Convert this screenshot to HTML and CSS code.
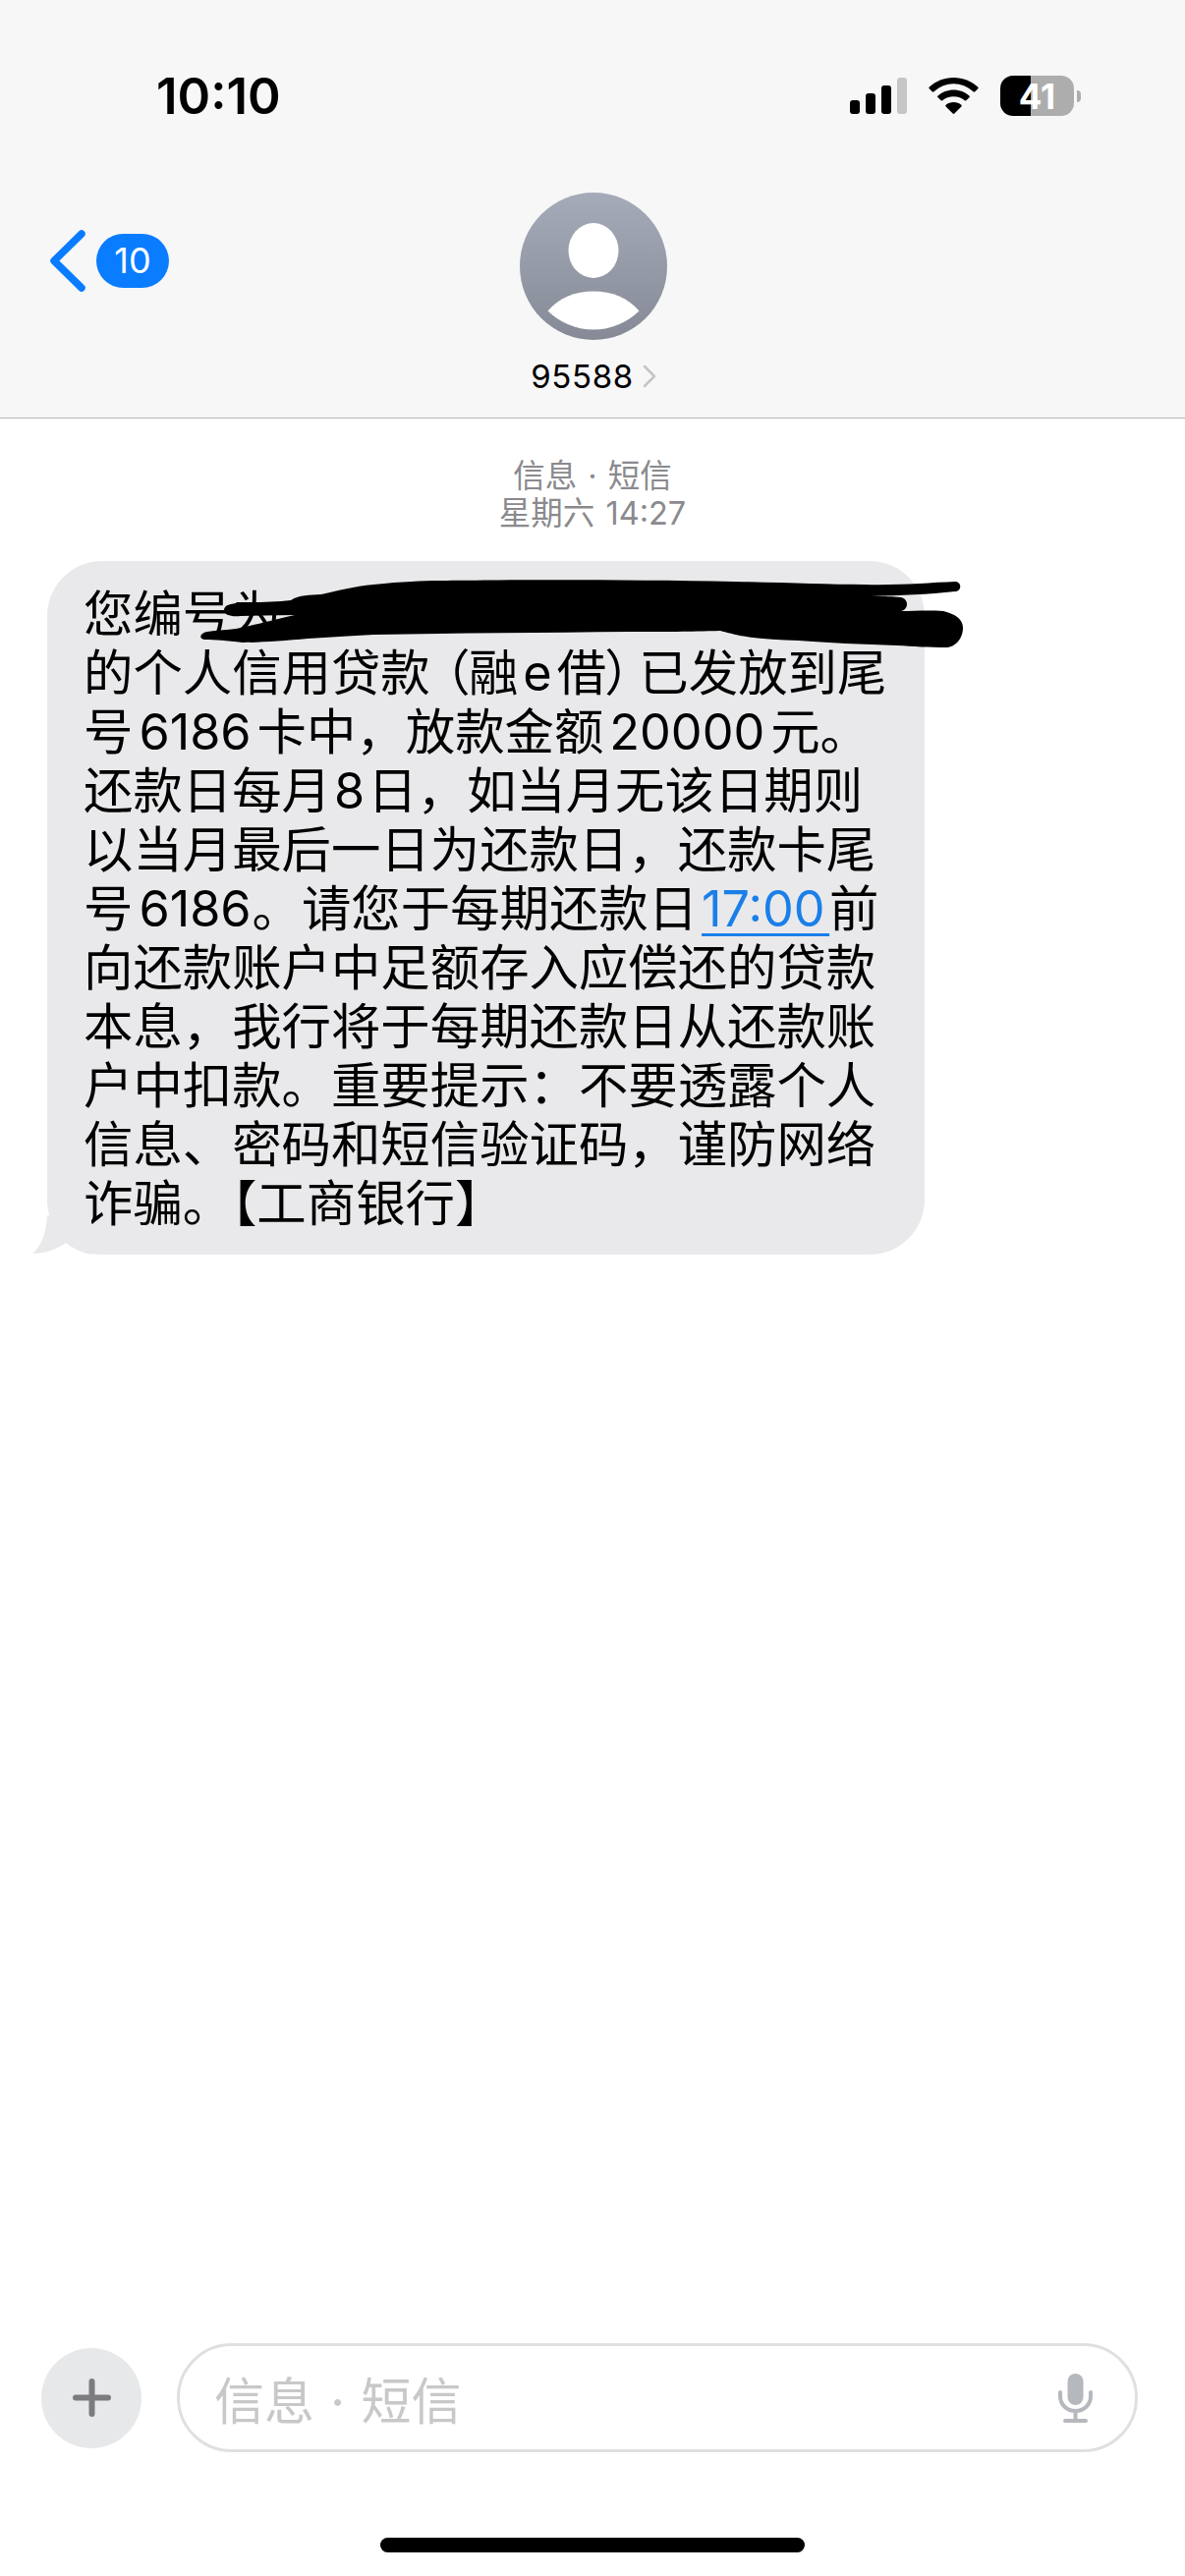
FILE: index.html
```html
<!DOCTYPE html>
<html lang="zh-CN">
<head>
    <meta charset="UTF-8">
    <meta name="viewport" content="width=device-width, initial-scale=1.0">
    <title>95588</title>
    <link rel="stylesheet" href="styles.css">
</head>
<body>
    <div id="screen">
        <header class="topbar">
            <div class="statusbar">
                <span class="time">10:10</span>
                <div class="status-icons">
                    <div class="signal">
                        <i class="bar1"></i><i class="bar2"></i><i class="bar3"></i><i class="bar4"></i>
                    </div>
                    <svg class="wifi" width="51" height="37" viewBox="0 0 51 37">
                        <path d="M25.5 0C15.8 0 7.3 3.7 .8 9.6c-.6.6-.6 1.200-.1 1.700l3 3c.5.500 1.200.500 1.800 0C11.500 9.100 18.100 6.300 25.500 6.300s14 2.800 20 8c.6.500 1.300.500 1.800 0l3-3c.5-.5.5-1.100-.1-1.700C43.700 3.700 35.200 0 25.500 0z"/>
                        <path d="M25.500 12.400c-6.200 0-11.800 2.300-16 6-.6.500-.6 1.200-.1 1.700l3 3c.5.500 1.200.5 1.800.1 3.100-2.500 6.900-4 11.300-4s8.200 1.500 11.300 4c.6.400 1.300.4 1.800-.1l3-3c.5-.5.5-1.200-.1-1.700-4.200-3.700-9.800-6-16-6z"/>
                        <path d="M25.500 25c-3 0-5.700 1-7.800 2.800-.6.500-.6 1.200-.1 1.700l7 7c.5.500 1.300.500 1.800 0l7-7c.5-.5.5-1.200-.1-1.700C31.200 26 28.500 25 25.500 25z"/>
                    </svg>
                    <div class="battery">
                        <div class="battery-body"><span>41</span></div>
                        <div class="battery-nub"></div>
                    </div>
                </div>
            </div>
            <div class="navrow">
                <div class="back">
                    <svg width="36" height="63" viewBox="0 0 36 63">
                        <path d="M32 4L4 31.500L32 59" fill="none" stroke="#0a7cff" stroke-width="7.500" stroke-linecap="round" stroke-linejoin="round"/>
                    </svg>
                    <span class="badge">10</span>
                </div>
                <div class="contact">
                    <svg class="avatar" width="150" height="150" viewBox="0 0 150 150">
                        <defs>
                            <linearGradient id="avatarfill" x1="0" y1="0" x2="0" y2="1">
                                <stop offset="0" stop-color="#a6abb9"/>
                                <stop offset="1" stop-color="#858a96"/>
                            </linearGradient>
                        </defs>
                        <circle cx="75" cy="75" r="75" fill="url(#avatarfill)"/>
                        <ellipse cx="75" cy="59" rx="25.500" ry="28" fill="#fff"/>
                        <path d="M28.500 120.500C40 107 56 100.500 75 100.500S110 107 121.500 120.500C110 132 93 139.500 75 139.500S40 132 28.500 120.500z" fill="#fff"/>
                    </svg>
                    <div class="contact-name">
                        <span>95588</span>
                        <svg width="14" height="24" viewBox="0 0 14 24">
                            <path d="M2 2L12 12L2 22" fill="none" stroke="#c4c4c6" stroke-width="2.500" stroke-linecap="round" stroke-linejoin="round"/>
                        </svg>
                    </div>
                </div>
            </div>
        </header>

        <main class="thread">
            <div class="stamp">
                <div>信息 · 短信</div>
                <div>星期六 14:27</div>
            </div>
            <div class="bubble">
                您编号为 6<br>
                的个人信用贷款<span class="lparen">（</span>融<span class="gap-e">e</span>借<span class="rparen">）</span>已发放到尾<br>
                号<span class="gap">6186</span>卡中，放款金额<span class="gap">20000</span>元。<br>
                还款日每月<span class="gap-small">8</span>日，如当月无该日期则<br>
                以当月最后一日为还款日，还款卡尾<br>
                号<span class="gap-left">6186</span>。请您于每期还款日<a href="#">17:00&#8202;</a>前<br>
                向还款账户中足额存入应偿还的贷款<br>
                本息，我行将于每期还款日从还款账<br>
                户中扣款。重要提示：不要透露个人<br>
                信息、密码和短信验证码，谨防网络<br>
                诈骗。【工商银行】
                <svg class="tail" width="60" height="40" viewBox="0 0 60 40">
                    <path d="M15 0C14 20 8 33 0 38.500C12 39.500 24 35 34 28C40 33 50 38 60 40V0z" fill="#e9e9eb"/>
                </svg>
                <svg class="scribble" width="830" height="80" viewBox="160 585 830 80">
                    <path d="M208 644C216 641 228 642 240 640C255 637 275 632 300 626L245 627C235 628 228 626 228 621C228 616 235 614 243 614C260 613 280 613 296 611C305 605 315 606 327 605C345 601 360 597 380 595C410 592 430 591 447 591C520 590 650 590 747 592C800 593 840 595 880 595C915 596 945 593 972 592C979 592 979 602 972 602C945 605 915 606 887 607C900 607 910 607 917 608C925 610 925 620 917 622C930 622 945 621 960 622C972 625 980 630 980 639C980 650 972 659 963 659C945 659 930 658 913 657C880 656 840 654 813 652C790 651 770 650 753 647C745 645 740 644 733 642C700 643 680 643 640 643C560 644 470 644 380 646C355 647 335 649 313 650C290 652 265 654 247 654C230 652 220 651 208 651C203 650 203 646 208 644z" fill="#000"/>
                </svg>
            </div>
        </main>

        <footer class="composer">
            <div class="inputrow">
                <div class="plus">
                    <svg width="39" height="39" viewBox="0 0 39 39">
                        <path d="M19.500 3V36M3 19.500H36" stroke="#7c7c80" stroke-width="6" stroke-linecap="round"/>
                    </svg>
                </div>
                <div class="field">
                    <span>信息 · 短信</span>
                    <svg width="35" height="50" viewBox="0 0 35 50">
                        <rect x="9.500" y="0" width="16" height="32" rx="8" fill="#b5b8bd"/>
                        <path d="M2 19V23C2 31.500 9 38 17.500 38S33 31.500 33 23V19M17.500 38V47M7 48H28" fill="none" stroke="#b5b8bd" stroke-width="4" stroke-linecap="round"/>
                    </svg>
                </div>
            </div>
            <div class="homebar"></div>
        </footer>
    </div>
</body>
</html>
```
FILE: styles.css
```css
body {
    margin: 0;
    background-color: #fff;
    font-family: Inter, "Noto Sans CJK SC", sans-serif;
    color: #000;
}
#screen {
    width: 1206px;
    height: 2622px;
    display: flex;
    flex-direction: column;
    overflow: hidden;
}
.topbar {
    height: 425px;
    background-color: #f7f7f7;
    border-bottom: 1px solid #b5b5b5;
}
.statusbar {
    display: flex;
    justify-content: space-between;
    align-items: center;
    height: 41px;
    padding: 77px 106px 0 159px;
}
.time {
    font-size: 51px;
    font-weight: 600;
    line-height: 41px;
}
.status-icons {
    display: flex;
    align-items: center;
    gap: 22px;
}
.signal {
    display: flex;
    align-items: flex-end;
    gap: 6px;
    height: 37px;
}
.signal i {
    display: block;
    width: 10px;
    border-radius: 3px;
    background-color: #000;
}
.signal .bar1 { height: 14px; }
.signal .bar2 { height: 21px; }
.signal .bar3 { height: 29px; }
.signal .bar4 { height: 37px; background-color: #c6c6c6; }
.battery {
    display: flex;
    align-items: center;
    gap: 3px;
}
.battery-body {
    width: 75px;
    height: 41px;
    border-radius: 13px;
    background: linear-gradient(to right, #000 41%, #adadad 41%);
    color: #fff;
    display: flex;
    align-items: center;
    justify-content: center;
    font-size: 35px;
    font-weight: 700;
}
.battery-nub {
    width: 4px;
    height: 12px;
    border-radius: 0 6px 6px 0;
    background-color: #adadad;
}
.navrow {
    display: grid;
    grid-template-columns: 1fr auto 1fr;
    padding: 78px 0 0 2px;
}
.back {
    display: flex;
    align-items: center;
    gap: 11px;
    height: 63px;
    margin-top: 38px;
    padding-left: 49px;
}
.badge {
    width: 74px;
    height: 55px;
    border-radius: 28px;
    background-color: #0a7cff;
    color: #fff;
    font-size: 36px;
    line-height: 55px;
    text-align: center;
}
.contact {
    display: flex;
    flex-direction: column;
    align-items: center;
}
.avatar {
    display: block;
}
.contact-name {
    display: flex;
    align-items: center;
    gap: 9px;
    margin-top: 15px;
    font-size: 33px;
    line-height: 44px;
    letter-spacing: .6px;
}
.thread {
    flex: 1;
}
.stamp {
    padding-top: 40px;
    text-align: center;
    color: #8a8a8e;
    font-size: 32.500px;
    line-height: 38px;
    word-spacing: 2px;
}
.bubble {
    position: relative;
    width: 819px;
    margin: 29px 0 0 48px;
    padding: 24px 37px 22px 37px;
    border-radius: 56px;
    background-color: #e9e9eb;
    font-size: 50.400px;
    line-height: 60px;
    white-space: nowrap;
}
.bubble a {
    margin-left: 4px;
    color: #1a7fe8;
    text-decoration: underline;
    text-decoration-thickness: 3px;
    text-underline-offset: 7px;
}
.gap {
    margin: 0 6px;
}
.gap-e {
    margin: 0 5px;
}
.gap-small {
    margin: 0 3px;
}
.gap-left {
    margin: 0 1px 0 6px;
}
.lparen {
    margin-left: 14px;
    font-feature-settings: "palt";
}
.rparen {
    margin-right: 8px;
    font-feature-settings: "palt";
}
.tail {
    position: absolute;
    left: -15px;
    bottom: 0;
}
.scribble {
    position: absolute;
    left: 112px;
    top: 14px;
    overflow: visible;
}
.inputrow {
    display: flex;
    align-items: center;
    gap: 36px;
    padding: 0 48px 0 42px;
}
.plus {
    width: 102px;
    height: 102px;
    flex-shrink: 0;
    border-radius: 50%;
    background-color: #e6e8e9;
    display: flex;
    align-items: center;
    justify-content: center;
}
.field {
    flex: 1;
    height: 105px;
    border: 3px solid #e0e0e0;
    border-radius: 56px;
    display: flex;
    align-items: center;
    justify-content: space-between;
    padding: 0 43px 0 35px;
    color: #c8c8c8;
    font-size: 51px;
    word-spacing: 2px;
}
.homebar {
    width: 432px;
    height: 15px;
    margin: 87px auto 24px;
    border-radius: 8px;
    background-color: #000;
}
```
